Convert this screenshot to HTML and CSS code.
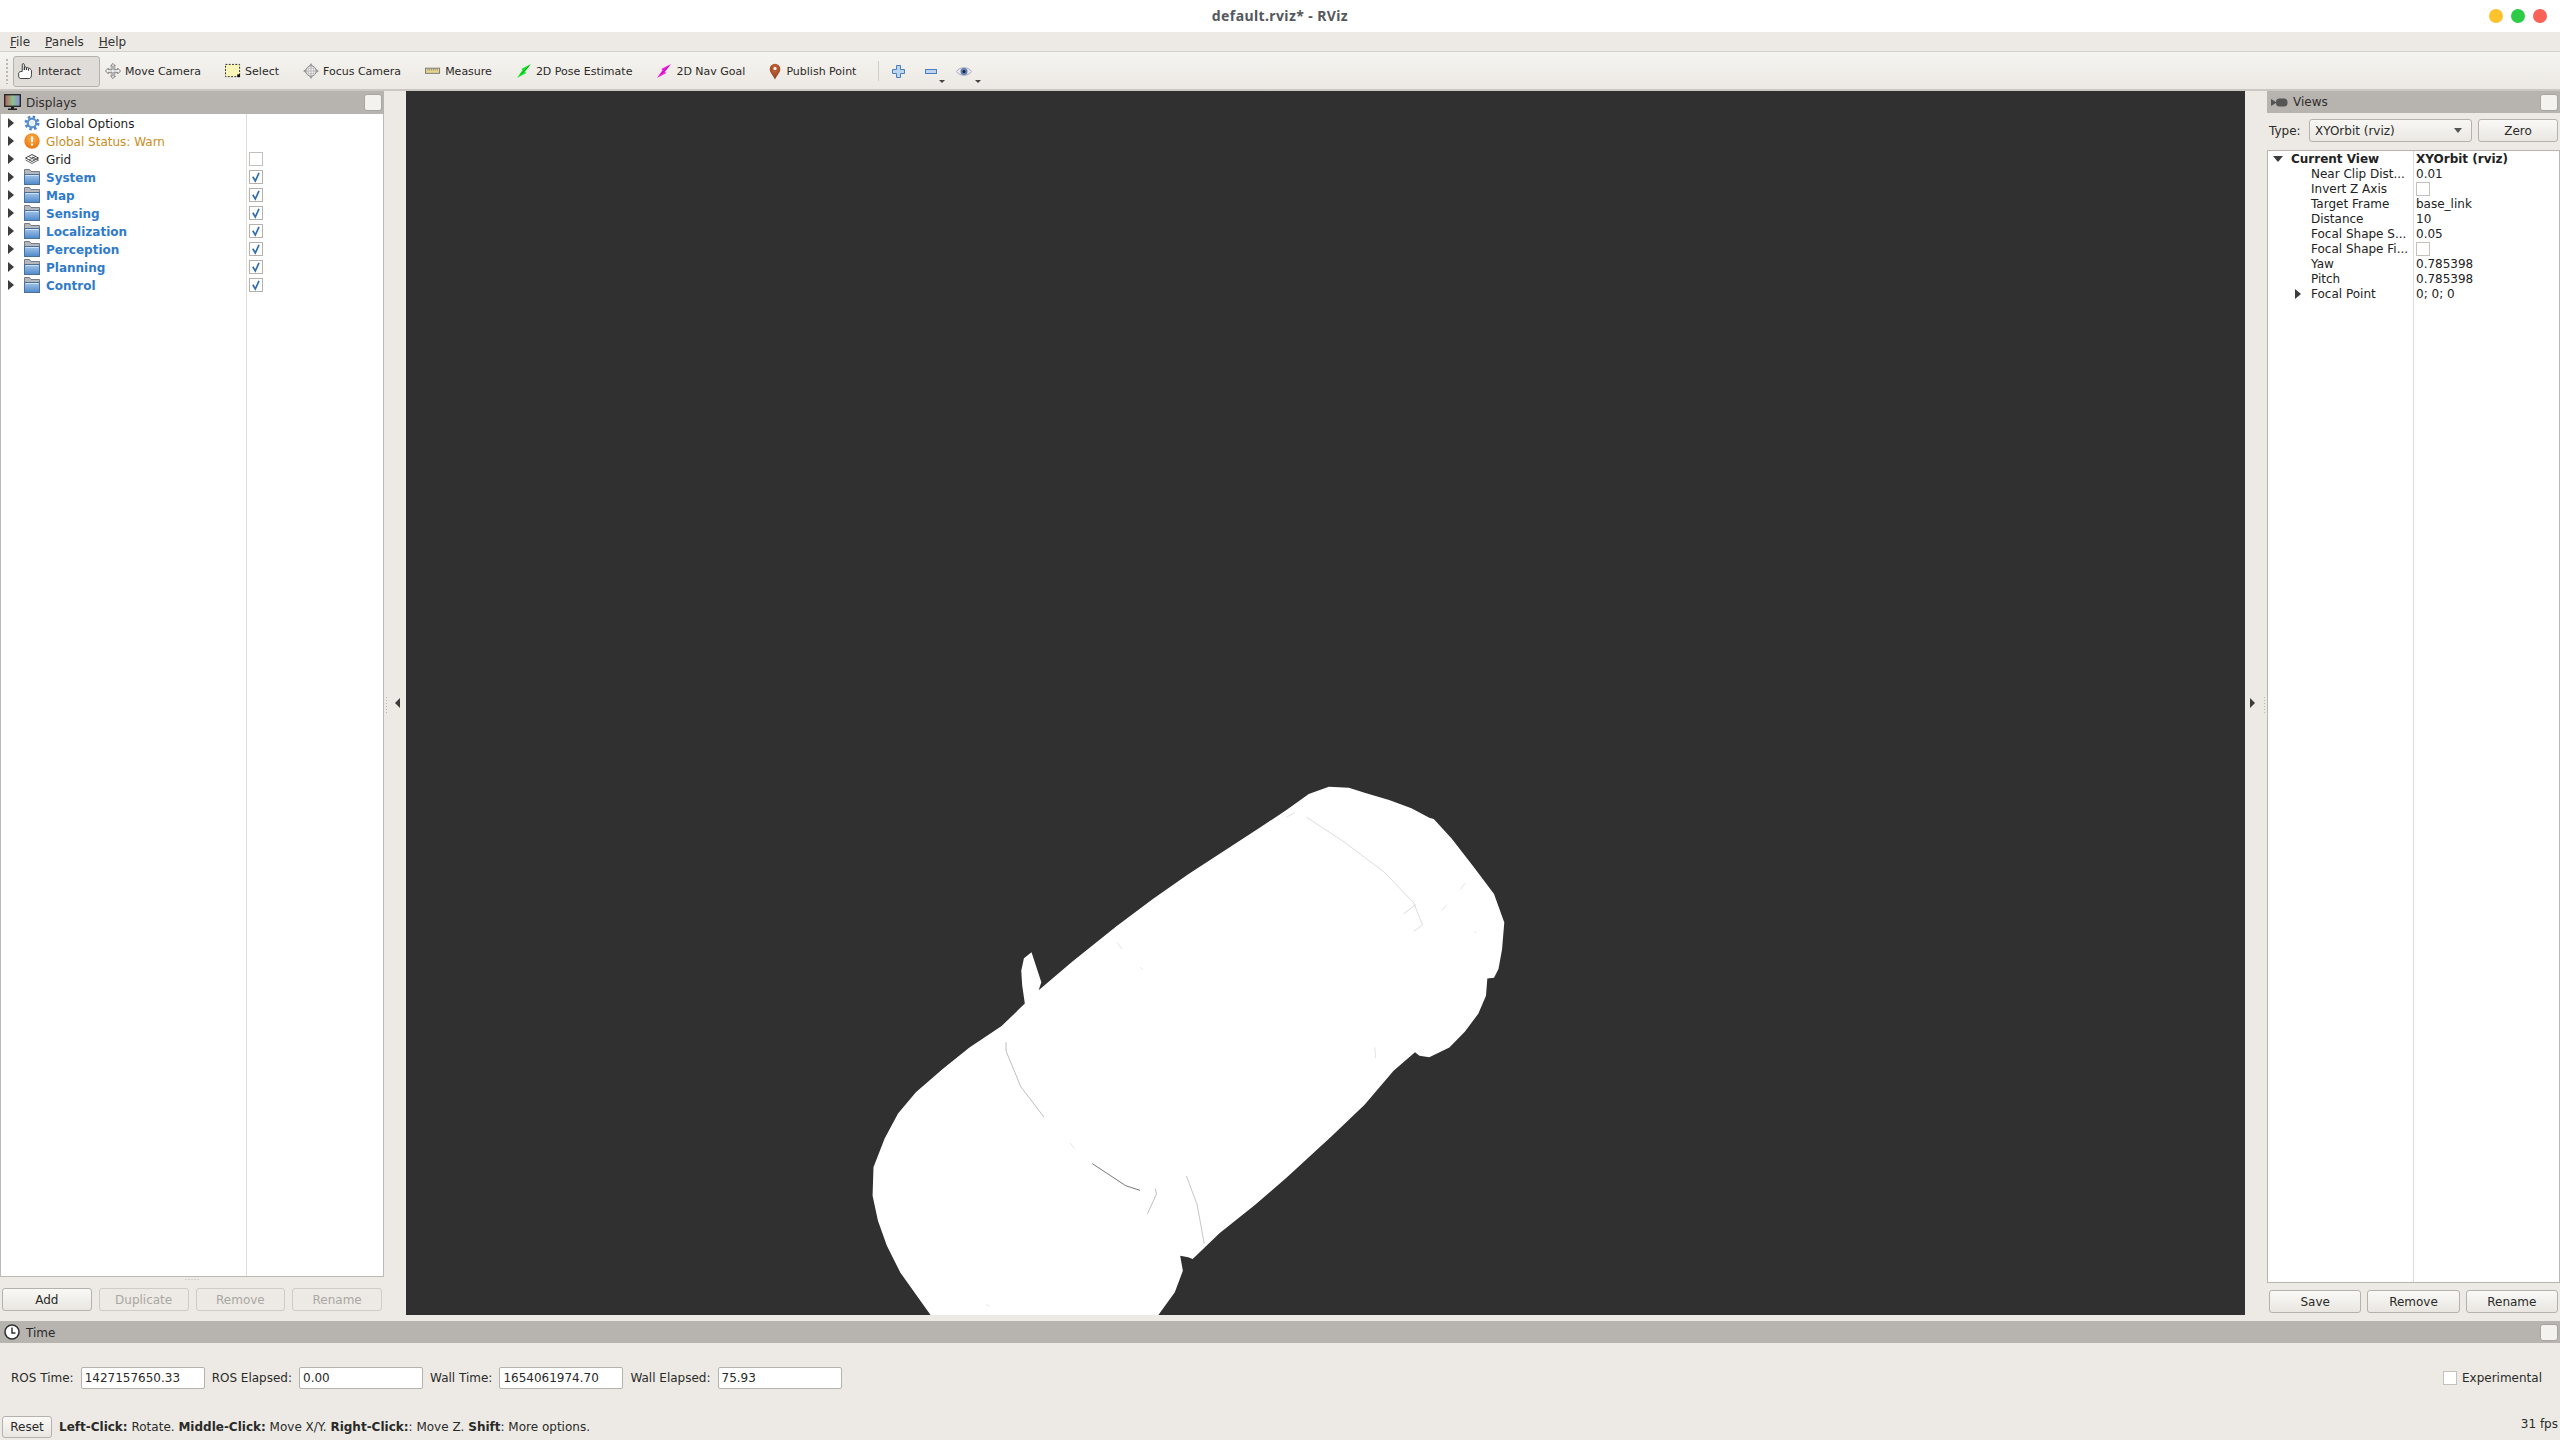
FILE: index.html
```html
<!DOCTYPE html>
<html lang="en">
<head>
<meta charset="utf-8">
<title>default.rviz* - RViz</title>
<link rel="stylesheet" href="styles.css">
</head>
<body>
<svg class="defs" width="0" height="0" aria-hidden="true">
  <defs>
    <linearGradient id="btnless" x1="0" y1="0" x2="0" y2="1"><stop offset="0" stop-color="#a6c6ea"/><stop offset="1" stop-color="#4f89ca"/></linearGradient>
    <linearGradient id="mon" x1="0" y1="0" x2="1" y2="0"><stop offset="0" stop-color="#b85c5c"/><stop offset=".5" stop-color="#8cc08c"/><stop offset="1" stop-color="#8a8cd8"/></linearGradient>
    <radialGradient id="warn" cx=".5" cy=".35" r=".7"><stop offset="0" stop-color="#fbb04a"/><stop offset="1" stop-color="#e8700c"/></radialGradient>
    <radialGradient id="pin" cx=".5" cy=".3" r=".8"><stop offset="0" stop-color="#d0683a"/><stop offset="1" stop-color="#7c3a1e"/></radialGradient>
    <symbol id="folder" viewBox="0 0 16 16">
      <path d="M.5.500h5l1.500 2h8.500v13H.5z" fill="#b4b7bb" stroke="#767c83"/>
      <rect x=".5" y="5.500" width="15" height="10" fill="url(#btnless)" stroke="#4a6f9c"/>
      <path d="M1.500 6.500h13" stroke="#d2e2f5"/>
    </symbol>
    <symbol id="check" viewBox="0 0 14 14">
      <rect x=".5" y=".5" width="13" height="13" fill="#fff" stroke="#b5b2ad"/>
      <path d="M3.800 6.800 6.300 11 10 2.800" fill="none" stroke="#2f6db0" stroke-width="1.700"/>
    </symbol>
    <symbol id="uncheck" viewBox="0 0 14 14">
      <rect x=".5" y=".5" width="13" height="13" fill="#fff" stroke="#c4c1bc"/>
    </symbol>
  </defs>
</svg>
<div class="app">
  <header class="titlebar">
    <div class="title">default.rviz* - RViz</div>
    <div class="wm">
      <span class="dot dot-y"></span><span class="dot dot-g"></span><span class="dot dot-r"></span>
    </div>
  </header>
  <nav class="menubar">
    <span class="menu"><u>F</u>ile</span>
    <span class="menu"><u>P</u>anels</span>
    <span class="menu"><u>H</u>elp</span>
  </nav>
  <div class="toolbar">
    <span class="grip"></span>
    <div class="tool active">
      <svg class="ti" viewBox="0 0 17 17"><path d="M4.500 9V1.800a1.100 1.100 0 0 1 2.200 0V7.500V5.200a1.100 1.100 0 0 1 2.200 0V7.500V5.800a1.100 1.100 0 0 1 2.200 0V8V6.800a1.100 1.100 0 0 1 2.200 0l1 1V12.500c0 2-.8 3.500-2 4H3c-1.300 0-2.300-1-2.300-2.500V11c0-1.200 1.500-2.200 3.800-2z" fill="#fff" stroke="#333" stroke-width="1"/></svg>
      <span>Interact</span>
    </div>
    <div class="tool">
      <svg class="ti" viewBox="0 0 17 17"><path d="M8.500.5 11 3H9.500v4H13.500V5.500L16.500 8.500 13.500 11.500V10H9.500v4H11L8.500 16.500 6 14h1.500v-4H3.500v1.500L.5 8.500 3.500 5.500V7h4V3H6z" fill="#eee" stroke="#777"/><path d="M4 6.500h9M4 10.500h9M6.500 3.500v10M10.500 3.500v10" stroke="#aaa" stroke-width=".6"/></svg>
      <span>Move Camera</span>
    </div>
    <div class="tool">
      <svg class="ti" viewBox="0 0 17 17"><rect x=".5" y="1.500" width="15" height="13" fill="#fbf5b8" stroke="#222" stroke-dasharray="2 1.500"/><rect x="13" y="12" width="3" height="3" fill="#111"/></svg>
      <span>Select</span>
    </div>
    <div class="tool">
      <svg class="ti" viewBox="0 0 17 17"><path d="M8.500 0 10.500 3h-4zM8.500 17 6.500 14h4zM0 8.500 3 6.500v4zM17 8.500 14 10.500v-4z" fill="#999"/><circle cx="8.500" cy="8.500" r="5.500" fill="#eee" stroke="#888"/><path d="M8.500 3v11M3 8.500h11M5 5.500h7M5 11.500h7M5.500 5v7M11.500 5v7" stroke="#aaa" stroke-width=".7"/></svg>
      <span>Focus Camera</span>
    </div>
    <div class="tool">
      <svg class="ti" viewBox="0 0 17 17"><rect x=".5" y="5.500" width="15" height="5.500" fill="#e5d48c" stroke="#777"/><path d="M3 6v2M5 6v2M7 6v2M9 6v2M11 6v2M13 6v2" stroke="#777" stroke-width=".7"/></svg>
      <span>Measure</span>
    </div>
    <div class="tool">
      <svg class="ti" viewBox="0 0 17 17"><path d="M16 1 9.500 9.500 11 10.500 1 16 7 7.500 5.500 6.500z" fill="#12e62a"/><path d="M14 3 5 12" stroke="#0a8a1c" stroke-width=".8"/></svg>
      <span>2D Pose Estimate</span>
    </div>
    <div class="tool">
      <svg class="ti" viewBox="0 0 17 17"><path d="M16 1 9.500 9.500 11 10.500 1 16 7 7.500 5.500 6.500z" fill="#f01ee0"/><path d="M14 3 5 12" stroke="#9a0f90" stroke-width=".8"/></svg>
      <span>2D Nav Goal</span>
    </div>
    <div class="tool tool-pin">
      <svg class="ti ti-pin" viewBox="0 0 12 17"><path d="M6 16.500C3.500 11.500.7 9.500.7 6A5.300 5.300 0 0 1 11.300 6C11.300 9.500 8.500 11.500 6 16.500z" fill="url(#pin)"/><circle cx="6" cy="5.500" r="1.500" fill="#fff"/></svg>
      <span>Publish Point</span>
    </div>
    <span class="tsep"></span>
    <div class="mini">
      <svg class="mi" viewBox="0 0 13 13"><path d="M4.500.5h4v4h4v4h-4v4h-4v-4h-4v-4h4z" fill="#bcd4f0" stroke="#4a7fc0"/></svg>
    </div>
    <div class="mini mini-minus">
      <svg class="mi" viewBox="0 0 13 13"><rect x=".5" y="4.500" width="11" height="4" fill="#bcd4f0" stroke="#4a7fc0"/></svg>
      <span class="drop"></span>
    </div>
    <div class="mini">
      <svg class="mi mi-eye" viewBox="0 0 16 13"><path d="M.5 6.500C3 1.500 13 1.500 15.500 6.500 13 11.500 3 11.500.5 6.500z" fill="#e8e8ea" stroke="#aab"/><circle cx="8" cy="6.500" r="3.500" fill="#5b7fb5"/><circle cx="8" cy="6.500" r="1.500" fill="#223"/></svg>
      <span class="drop drop-eye"></span>
    </div>
  </div>
  <main class="main">
    <section class="dock dock-left">
      <div class="dock-title">
        <svg class="dock-ico" viewBox="0 0 17 17"><rect x=".7" y=".7" width="15.600" height="11.600" fill="url(#mon)" stroke="#222" stroke-width="1.300"/><path d="M7 13h3v1.500h3v1.500H4v-1.500h3z" fill="#222"/></svg>
        <span class="dock-name">Displays</span>
        <span class="float"></span>
      </div>
      <div class="tree tree-displays">
        <div class="col-line"></div>
        <div class="row"><i class="arrow"></i>
          <svg class="ico" viewBox="0 0 16 16"><circle cx="8" cy="8" r="6" fill="none" stroke="#4f86cc" stroke-width="3" stroke-dasharray="2.400 2.300"/><circle cx="8" cy="8" r="4.300" fill="none" stroke="#5b8fd0" stroke-width="2.200"/><circle cx="8" cy="8" r="2.400" fill="#e4edf8"/></svg>
          <span class="label">Global Options</span>
        </div>
        <div class="row"><i class="arrow"></i>
          <svg class="ico" viewBox="0 0 16 16"><circle cx="8" cy="8" r="7.700" fill="url(#warn)"/><rect x="7" y="3.500" width="2" height="5.500" fill="#fff"/><rect x="7" y="10.500" width="2" height="2" fill="#fff"/></svg>
          <span class="label warn">Global Status: Warn</span>
        </div>
        <div class="row"><i class="arrow"></i>
          <svg class="ico" viewBox="0 0 16 16"><path d="M8 3.500 14.500 7 8 10.500 1.500 7z" fill="none" stroke="#444"/><path d="M8 6 14.500 9 8 12.500 1.500 9M4.500 5.500l6.500 3.500M11.500 5.500 5 9" fill="none" stroke="#444" stroke-width=".8"/></svg>
          <span class="label">Grid</span>
          <svg class="cb"><use href="#uncheck"/></svg>
        </div>
        <div class="row"><i class="arrow"></i><svg class="ico"><use href="#folder"/></svg><span class="label group">System</span><svg class="cb"><use href="#check"/></svg></div>
        <div class="row"><i class="arrow"></i><svg class="ico"><use href="#folder"/></svg><span class="label group">Map</span><svg class="cb"><use href="#check"/></svg></div>
        <div class="row"><i class="arrow"></i><svg class="ico"><use href="#folder"/></svg><span class="label group">Sensing</span><svg class="cb"><use href="#check"/></svg></div>
        <div class="row"><i class="arrow"></i><svg class="ico"><use href="#folder"/></svg><span class="label group">Localization</span><svg class="cb"><use href="#check"/></svg></div>
        <div class="row"><i class="arrow"></i><svg class="ico"><use href="#folder"/></svg><span class="label group">Perception</span><svg class="cb"><use href="#check"/></svg></div>
        <div class="row"><i class="arrow"></i><svg class="ico"><use href="#folder"/></svg><span class="label group">Planning</span><svg class="cb"><use href="#check"/></svg></div>
        <div class="row"><i class="arrow"></i><svg class="ico"><use href="#folder"/></svg><span class="label group">Control</span><svg class="cb"><use href="#check"/></svg></div>
      </div>
      <div class="hgrip"></div>
      <div class="btnrow btnrow-left">
        <button class="btn">Add</button>
        <button class="btn" disabled>Duplicate</button>
        <button class="btn" disabled>Remove</button>
        <button class="btn" disabled>Rename</button>
      </div>
    </section>
    <div class="splitter splitter-left"><span class="vgrip"></span><i class="tri tri-l"></i></div>
    <section class="canvas">
      <svg class="scene" viewBox="0 0 1839 1224" preserveAspectRatio="none">
        <g transform="translate(434 669) scale(.44643 .35714)">
          <path fill="#fff" d="M204 1556 135 1435 105 1360 85 1290 73 1220 75 1140 100 1060 130 990 170 930 230 865 290 805 362 745 414 682 408 630 406 590 412 555 429 538 440 580 451 622 445 645 520 565 620 465 700 390 780 320 860 255 940 190 1000 140 1050 95 1095 75 1140 78 1175 92 1230 112 1280 135 1320 162 1330 165 1370 220 1420 300 1465 375 1488 455 1483 530 1475 585 1465 610 1450 612 1447 660 1430 710 1400 760 1365 805 1320 832 1298 828 1288 818 1240 870 1175 965 1100 1055 1000 1170 930 1245 850 1325 790 1397 780 1392 762 1388 768 1430 750 1490 712 1556Z"/>
          <g fill="none" stroke-width="1.200">
            <path d="M1045 160 1130 230 1220 315 1285 400 1305 462 1285 480M1263 430 1290 405" stroke="#b5b5b5"/>
            <path d="M372 790 372 815 405 915 457 1000" stroke="#777"/>
            <path d="M565 1130 640 1192 672 1205" stroke="#444" stroke-width="1.800"/>
            <path d="M706 1200 709 1215 689 1270" stroke="#777"/>
            <path d="M776 1165 800 1245 816 1355" stroke="#888"/>
            <path d="M620 510 632 530M672 580 678 587M1400 345 1390 362M1360 405 1348 420M1198 805 1200 835M515 1072 525 1088M328 1525 335 1529M1420 480 1425 484M1000 160 1018 148" stroke="#c4c4c4"/>
          </g>
        </g>
      </svg>
    </section>
    <div class="splitter splitter-right"><span class="vgrip"></span><i class="tri tri-r"></i></div>
    <section class="dock dock-right">
      <div class="dock-title dock-title-r">
        <svg class="dock-ico" viewBox="0 0 17 17"><path d="M0 5l5 3v1l-5 3z" fill="#555"/><rect x="5" y="4.500" width="11.500" height="8" rx="3.500" fill="#555"/></svg>
        <span class="dock-name">Views</span>
        <span class="float"></span>
      </div>
      <div class="typerow">
        <span class="typelabel">Type:</span>
        <div class="combo"><span>XYOrbit (rviz)</span><i class="combo-arrow"></i></div>
        <button class="btn btn-zero">Zero</button>
      </div>
      <div class="tree tree-views">
        <div class="col-line col-line-r"></div>
        <div class="vrow"><span class="vkey vkey-head"><i class="arrow arrow-down"></i><b>Current View</b></span><b class="vval">XYOrbit (rviz)</b></div>
        <div class="vrow"><span class="vkey">Near Clip Dist...</span><span class="vval">0.01</span></div>
        <div class="vrow"><span class="vkey">Invert Z Axis</span><svg class="cb-v"><use href="#uncheck"/></svg></div>
        <div class="vrow"><span class="vkey">Target Frame</span><span class="vval">base_link</span></div>
        <div class="vrow"><span class="vkey">Distance</span><span class="vval">10</span></div>
        <div class="vrow"><span class="vkey">Focal Shape S...</span><span class="vval">0.05</span></div>
        <div class="vrow"><span class="vkey">Focal Shape Fi...</span><svg class="cb-v"><use href="#uncheck"/></svg></div>
        <div class="vrow"><span class="vkey">Yaw</span><span class="vval">0.785398</span></div>
        <div class="vrow"><span class="vkey">Pitch</span><span class="vval">0.785398</span></div>
        <div class="vrow"><span class="vkey vkey-sub"><i class="arrow arrow-sub"></i>Focal Point</span><span class="vval">0; 0; 0</span></div>
      </div>
      <div class="btnrow btnrow-right">
        <button class="btn">Save</button>
        <button class="btn">Remove</button>
        <button class="btn">Rename</button>
      </div>
    </section>
  </main>
  <section class="timebar">
    <svg class="clock" viewBox="0 0 16 16"><circle cx="8" cy="8" r="7" fill="#fff" stroke="#333" stroke-width="1.600"/><path d="M8 3.500V9h3.500" fill="none" stroke="#333" stroke-width="1.500"/></svg>
    <span class="dock-name">Time</span>
    <span class="float"></span>
  </section>
  <section class="timepanel">
    <label class="tl">ROS Time:</label><div class="field">1427157650.33</div>
    <label class="tl">ROS Elapsed:</label><div class="field">0.00</div>
    <label class="tl">Wall Time:</label><div class="field">1654061974.70</div>
    <label class="tl">Wall Elapsed:</label><div class="field">75.93</div>
    <div class="exp"><svg class="cb"><use href="#uncheck"/></svg><span>Experimental</span></div>
  </section>
  <footer class="status">
    <button class="btn btn-reset">Reset</button>
    <span class="hint"><b>Left-Click:</b> Rotate. <b>Middle-Click:</b> Move X/Y. <b>Right-Click:</b>: Move Z. <b>Shift</b>: More options.</span>
    <span class="fps">31 fps</span>
  </footer>
</div>
</body>
</html>
```
FILE: styles.css
```css
* { box-sizing: border-box; }
html, body { margin: 0; padding: 0; }
body { background: #edeae5; font: 12px/1 "DejaVu Sans", sans-serif; color: #2a2a28; overflow: hidden; }
.defs { position: absolute; }
.app { width: 2560px; height: 1440px; display: flex; flex-direction: column; overflow: hidden; }

.titlebar { height: 32px; flex: none; background: #fff; position: relative; display: flex; align-items: center; justify-content: center; }
.title { font: 700 14px "Noto Sans", sans-serif; color: #55585c; letter-spacing: .4px; margin-top: -2px; }
.wm { position: absolute; right: 13px; top: 9px; display: flex; gap: 8px; }
.dot { width: 14px; height: 14px; border-radius: 50%; }
.dot-y { background: #fdc22c; }
.dot-g { background: #2ecb48; }
.dot-r { background: #fc6156; }

.menubar { height: 20px; flex: none; display: flex; align-items: center; background: #edeae5; border-bottom: 1px solid #d4d1cc; padding-left: 10px; gap: 15px; color: #333; }

.toolbar { height: 39px; flex: none; display: flex; align-items: center; padding: 1px 0 0 5px; background: linear-gradient(#f6f4f0, #ece9e4); border-bottom: 2px solid #cbc8c3; font-size: 11px; }
.grip { width: 4px; height: 26px; margin-right: 4px; background-image: radial-gradient(circle, #bbb8b3 .8px, transparent 1px); background-size: 4px 4px; }
.tool { height: 31px; display: flex; align-items: center; gap: 4px; padding: 0 18px 0 4px; border: 1px solid transparent; border-radius: 3px; white-space: nowrap; }
.tool.active { background: #e0ddd8; border-color: #b5b2ad; }
.ti { width: 16px; height: 16px; flex: none; }
.ti-pin { width: 12px; height: 17px; margin-right: 1px; }
.tsep { width: 1px; height: 20px; background: #d0cdc8; margin: 0 13px 0 3px; }
.mini { display: flex; align-items: center; width: 33px; position: relative; height: 20px; }
.mini-minus { width: 31px; }
.mi { width: 13px; height: 13px; }
.mi-eye { width: 16px; }
.drop { position: absolute; left: 14px; top: 19px; border: 3px solid transparent; border-top: 3px solid #444; border-bottom: 0; }
.drop-eye { left: 19px; }

.main { flex: 1; display: flex; min-height: 0; }
.dock { display: flex; flex-direction: column; flex: none; }
.dock-left { width: 384px; }
.dock-right { width: 293px; }
.dock-title { height: 23px; flex: none; background: #b7b3af; display: flex; align-items: center; padding: 0 2px 0 4px; gap: 5px; color: #2f2e2d; font-size: 13px; }
.dock-title-r { height: 22px; }
.dock-ico { width: 17px; height: 17px; flex: none; }
.dock-name { flex: 1; font-size: 12px; }
.float { width: 18px; height: 17px; background: #f4f2ef; border: 1px solid #a8a5a1; border-radius: 3px; flex: none; }

.tree { background: #fff; border: 1px solid #bdbab5; border-top: 0; position: relative; flex: 1; min-height: 0; }
.col-line { position: absolute; left: 245px; top: 0; bottom: 0; width: 1px; background: #dedcd8; }
.col-line-r { left: 145px; }
.row { height: 18px; display: flex; align-items: center; position: relative; padding-left: 7px; color: #1e1e1e; }
.arrow { width: 0; height: 0; flex: none; border-style: solid; border-width: 5px 0 5px 6px; border-color: transparent transparent transparent #3c3c3c; }
.ico { width: 16px; height: 16px; margin-left: 10px; flex: none; }
.label { margin-left: 6px; padding-top: 2px; font-size: 12px; }
.warn { color: #c98d24; }
.group { color: #2f7bc9; font-weight: 700; }
.cb { width: 14px; height: 14px; flex: none; }
.row .cb { position: absolute; left: 248px; top: 2px; }

.hgrip { height: 11px; flex: none; background-image: radial-gradient(circle, #bbb8b3 .6px, transparent .8px); background-size: 3px 3px; background-repeat: repeat-x; background-position: center 1px; background-clip: content-box; padding: 0 184px; }
.btnrow { display: flex; flex: none; height: 23px; }
.btnrow-left { gap: 7px; padding: 0 2px; margin-bottom: 10px; }
.btnrow-right { gap: 6px; padding: 0 2px; margin: 7px 0 8px; }
.btn { flex: 1; font: 12px "DejaVu Sans", sans-serif; color: #2a2a28; background: linear-gradient(#faf9f7, #e9e6e1); border: 1px solid #b5b2ad; border-radius: 3px; padding: 0; }
.btn:disabled { color: #aaa7a2; border-color: #cfccc7; background: #edeae5; }

.splitter { width: 22px; flex: none; position: relative; }
.splitter-left { background: #edeae5; }
.vgrip { position: absolute; top: 605px; width: 3px; height: 17px; background-image: radial-gradient(circle, #bbb8b3 .8px, transparent 1px); background-size: 3px 3px; }
.splitter-left .vgrip { left: 1px; }
.splitter-right .vgrip { right: 1px; }
.tri { position: absolute; top: 607px; width: 0; height: 0; border-style: solid; }
.tri-l { left: 11px; border-width: 5px 5px 5px 0; border-color: transparent #3c3c3c transparent transparent; }
.tri-r { left: 5px; border-width: 5px 0 5px 5px; border-color: transparent transparent transparent #3c3c3c; }

.canvas { width: 1839px; flex: none; margin-bottom: 6px; background: #303030; }
.scene { width: 100%; height: 100%; display: block; }

.typerow { display: flex; flex: none; align-items: center; height: 23px; margin: 6px 2px 8px; }
.typelabel { width: 40px; }
.combo { width: 163px; height: 23px; display: flex; align-items: center; justify-content: space-between; padding: 0 9px 0 5px; background: linear-gradient(#f8f7f4, #ebe8e3); border: 1px solid #b5b2ad; border-radius: 3px; }
.combo-arrow { border: 4px solid transparent; border-top: 5px solid #555; border-bottom: 0; }
.btn-zero { flex: none; width: 80px; height: 23px; margin-left: 6px; }

.tree-views { border-color: #b9b6b1; border-top: 1px solid #b9b6b1; }
.vrow { height: 15px; display: flex; align-items: center; position: relative; color: #222; }
.vkey { width: 146px; padding-left: 43px; flex: none; white-space: nowrap; display: flex; align-items: center; }
.vkey-head { padding-left: 5px; }
.vkey-head b { margin-left: 8px; }
.arrow-down { border-width: 6px 5px 0 5px; border-color: #3c3c3c transparent transparent transparent; }
.vkey-sub { padding-left: 27px; }
.arrow-sub { margin-right: 10px; }
.vval { padding-left: 2px; }
.cb-v { width: 14px; height: 14px; margin-left: 2px; }

.timebar { height: 22px; flex: none; background: #b7b3af; display: flex; align-items: center; padding: 0 2px 0 4px; gap: 6px; }
.timebar .dock-name { padding-top: 1px; }
.clock { width: 16px; height: 16px; flex: none; }
.timepanel { height: 73px; flex: none; display: flex; align-items: center; padding: 0 18px 3px 11px; }
.tl { margin-right: 7px; white-space: nowrap; }
.field { width: 124px; height: 22px; flex: none; margin-right: 7px; background: #fff; border: 1px solid #b5b2ad; border-radius: 2px; padding-left: 3px; display: flex; align-items: center; }
.exp { margin-left: auto; display: flex; align-items: center; gap: 5px; }

.status { height: 24px; flex: none; display: flex; align-items: flex-start; padding: 0 2px; }
.btn-reset { flex: none; width: 50px; height: 22px; }
.hint { margin: 5px 0 0 7px; flex: 1; }
.fps { margin-top: 2px; }
```
